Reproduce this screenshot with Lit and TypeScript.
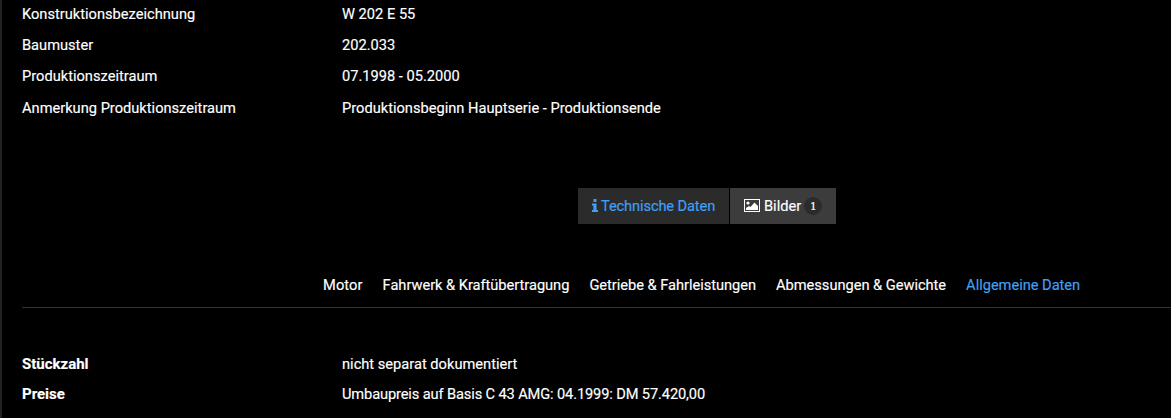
import { LitElement, html, css } from "lit";
import { customElement } from "lit/decorators.js";

const top = [
  ["Konstruktionsbezeichnung", "W 202 E 55"],
  ["Baumuster", "202.033"],
  ["Produktionszeitraum", "07.1998 - 05.2000"],
  ["Anmerkung Produktionszeitraum", "Produktionsbeginn Hauptserie - Produktionsende"],
];
const tabs = ["Motor", "Fahrwerk & Kraftübertragung", "Getriebe & Fahrleistungen", "Abmessungen & Gewichte", "Allgemeine Daten"];
const bottom = [
  ["Stückzahl", "nicht separat dokumentiert"],
  ["Preise", "Umbaupreis auf Basis C 43 AMG: 04.1999: DM 57.420,00"],
];

@customElement("app-root")
export class AppRoot extends LitElement {
  static styles = css`
    :host { display: block; height: 418px; overflow: hidden; background: #000; color: #fff; font-family: "Roboto", "Liberation Sans", sans-serif; font-size: 14.65px; border-left: 2px solid #222; box-sizing: border-box; -webkit-text-stroke: 0.15px currentColor; }
    .wrap { padding: 0 0 0 20px; }
    .row { display: grid; grid-template-columns: 320px 1fr; height: 31.2px; line-height: 28px; }
    .btns { display: flex; gap: 1px; margin-top: 63.2px; margin-left: 556px; height: 36px; }
    .btn { display: flex; align-items: center; padding-left: 14px; box-sizing: border-box; background: #2b2b2b; color: #40a0f5; white-space: nowrap; }
    .btn.info { width: 151px; gap: 3px; letter-spacing: -0.12px; }
    .btn.on { width: 106px; gap: 4px; background: #3c3c3c; color: #fff; }
    .btn svg { display: block; flex: none; }
    .badge { width: 18px; height: 18px; margin-left: -1px; border-radius: 50%; background: #2b2b2b; color: #fff; font-size: 10.5px; font-family: "DejaVu Serif", serif; display: flex; align-items: center; justify-content: center; -webkit-text-stroke: 0.2px #fff; }
    .tabs { display: flex; gap: 20px; margin-top: 50px; padding-left: 301px; height: 33px; line-height: 22px; border-bottom: 1px solid #333; letter-spacing: -0.03px; }
    .tabs span:first-child { letter-spacing: 0.1px; }
    .tabs span.on { color: #40a0f5; }
    .low { margin-top: 41px; }
    .low .row { height: 30px; line-height: 30px; }
    .low .k { font-weight: 700; font-size: 15px; }
    .low .row:last-child .v { letter-spacing: -0.13px; }
  `;
  render() {
    return html`<div class="wrap">
      <div class="rows">${top.map(([k, v]) => html`<div class="row"><div>${k}</div><div>${v}</div></div>`)}</div>
      <div class="btns">
        <div class="btn info"><svg width="6" height="13" viewBox="0 0 6 13"><path fill="currentColor" d="M1.500 0h3v3h-3zM0 4.500h4.500V11H6v2H0v-2h1.400V6.500H0z"/></svg><span>Technische Daten</span></div>
        <div class="btn on"><svg width="16" height="13" viewBox="0 0 16 13"><rect x=".5" y=".5" width="15" height="12" fill="none" stroke="currentColor"/><circle cx="4" cy="4" r="1.600" fill="currentColor"/><path fill="currentColor" d="M2 11V9l3-2 1.500 1L10.500 3.500 14 7v4z"/></svg><span>Bilder</span><span class="badge">1</span></div>
      </div>
      <nav class="tabs">${tabs.map((t, i) => html`<span class=${i === 4 ? "on" : ""}>${t}</span>`)}</nav>
      <div class="low">${bottom.map(([k, v]) => html`<div class="row"><div class="k">${k}</div><div class="v">${v}</div></div>`)}</div>
    </div>`;
  }
}
